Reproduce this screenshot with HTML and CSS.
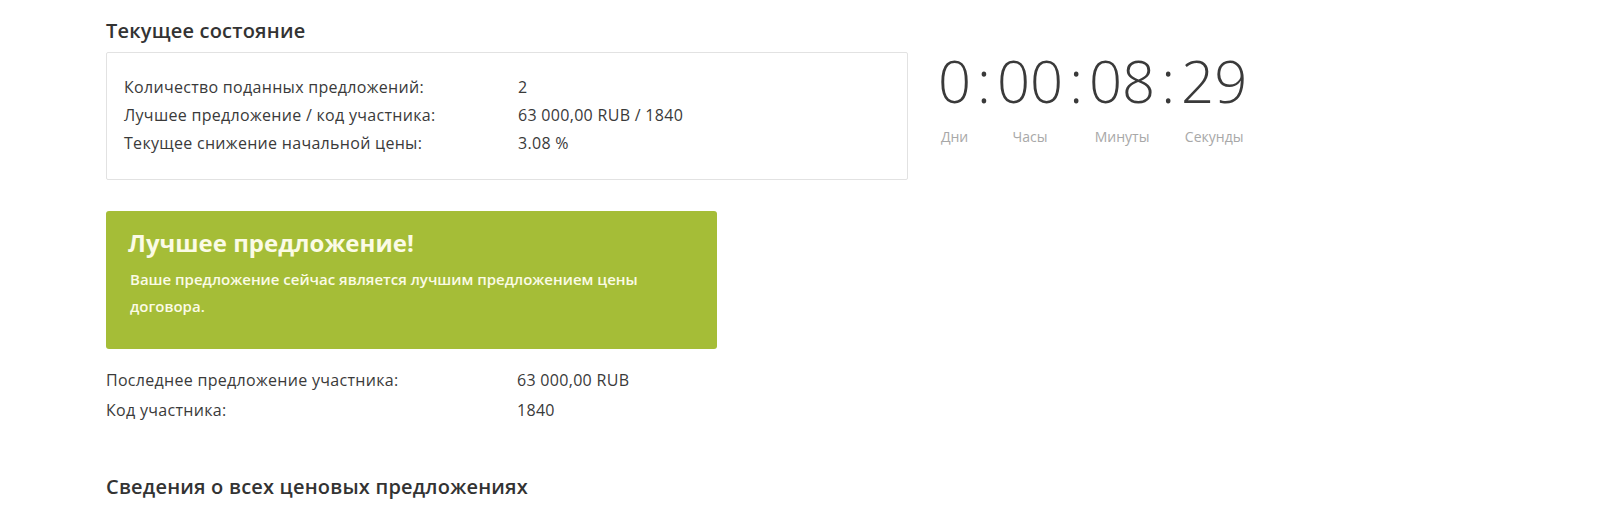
FILE: index.html
```html
<!DOCTYPE html>
<html lang="ru">
<head>
    <meta charset="UTF-8">
    <meta name="viewport" content="width=device-width, initial-scale=1.0">
    <title>Текущее состояние</title>
    <link rel="stylesheet" href="styles.css">
</head>
<body>
    <div class="page">
        <div class="top">
            <div class="status">
                <h2 class="heading">Текущее состояние</h2>
                <div class="status-box">
                    <div class="row">
                        <span class="row-label">Количество поданных предложений:</span>
                        <span class="row-value">2</span>
                    </div>
                    <div class="row">
                        <span class="row-label">Лучшее предложение / код участника:</span>
                        <span class="row-value">63 000,00 RUB / 1840</span>
                    </div>
                    <div class="row">
                        <span class="row-label">Текущее снижение начальной цены:</span>
                        <span class="row-value">3.08 %</span>
                    </div>
                </div>
            </div>

            <div class="countdown">
                <div class="cd-unit">
                    <span class="cd-num">0</span>
                    <span class="cd-label"><span>Дни</span></span>
                </div>
                <span class="cd-sep">:</span>
                <div class="cd-unit">
                    <span class="cd-num">00</span>
                    <span class="cd-label"><span>Часы</span></span>
                </div>
                <span class="cd-sep">:</span>
                <div class="cd-unit">
                    <span class="cd-num">08</span>
                    <span class="cd-label"><span>Минуты</span></span>
                </div>
                <span class="cd-sep">:</span>
                <div class="cd-unit">
                    <span class="cd-num">29</span>
                    <span class="cd-label"><span>Секунды</span></span>
                </div>
            </div>
        </div>

        <div class="alert-best">
            <h3 class="alert-title">Лучшее предложение!</h3>
            <p class="alert-text">Ваше предложение сейчас является лучшим предложением цены договора.</p>
        </div>

        <div class="own">
            <div class="row">
                <span class="own-label">Последнее предложение участника:</span>
                <span class="row-value">63 000,00 RUB</span>
            </div>
            <div class="row">
                <span class="own-label">Код участника:</span>
                <span class="row-value">1840</span>
            </div>
        </div>

        <h2 class="heading heading-bids">Сведения о всех ценовых предложениях</h2>
    </div>
</body>
</html>
```

FILE: styles.css
```css
body {
    margin: 0;
    font-family: "Open Sans", "Liberation Sans", sans-serif;
    color: #3a3a3a;
    background: #fff;
}

.page {
    padding: 18px 0 0 106px;
}

.top {
    display: flex;
    align-items: flex-start;
    gap: 30px;
}

.heading {
    margin: 0;
    font-size: 20px;
    font-weight: 600;
    letter-spacing: 0.2px;
    line-height: 26px;
    color: #333;
}

.status-box {
    width: 802px;
    box-sizing: border-box;
    margin-top: 8px;
    padding: 20px 17px 22px;
    border: 1px solid #e2e2e2;
    border-radius: 2px;
}

.row {
    display: flex;
    font-size: 16px;
    letter-spacing: 0.3px;
    line-height: 28px;
}

.row-label {
    width: 394px;
}

.own .row {
    line-height: 30px;
}

.own-label {
    width: 411px;
}

/* timer */
.countdown {
    display: flex;
    align-items: flex-start;
    padding-top: 34px;
}

.cd-unit {
    display: flex;
    flex-direction: column;
    align-items: center;
}

.cd-num,
.cd-sep {
    font-size: 58px;
    font-weight: 300;
    line-height: 58px;
    color: #3a3a3a;
}

.cd-sep {
    margin: 0 6px;
}

.cd-label {
    width: 0;
    display: flex;
    justify-content: center;
    margin-top: 17px;
    font-size: 14px;
    line-height: 20px;
    color: #a8a8a8;
    white-space: nowrap;
}

.alert-best {
    width: 611px;
    box-sizing: border-box;
    margin-top: 31px;
    padding: 16px 24px 29px 22px;
    background: #a5bd37;
    border-radius: 3px;
    color: #fbfbe6;
}

.alert-title {
    margin: 0;
    font-size: 24px;
    font-weight: 700;
    line-height: 32px;
}

.alert-text {
    margin: 7px 0 0 2px;
    font-size: 15px;
    font-weight: 600;
    line-height: 27px;
}

.own {
    margin-top: 16px;
}

.heading-bids {
    margin-top: 49px;
}
```
